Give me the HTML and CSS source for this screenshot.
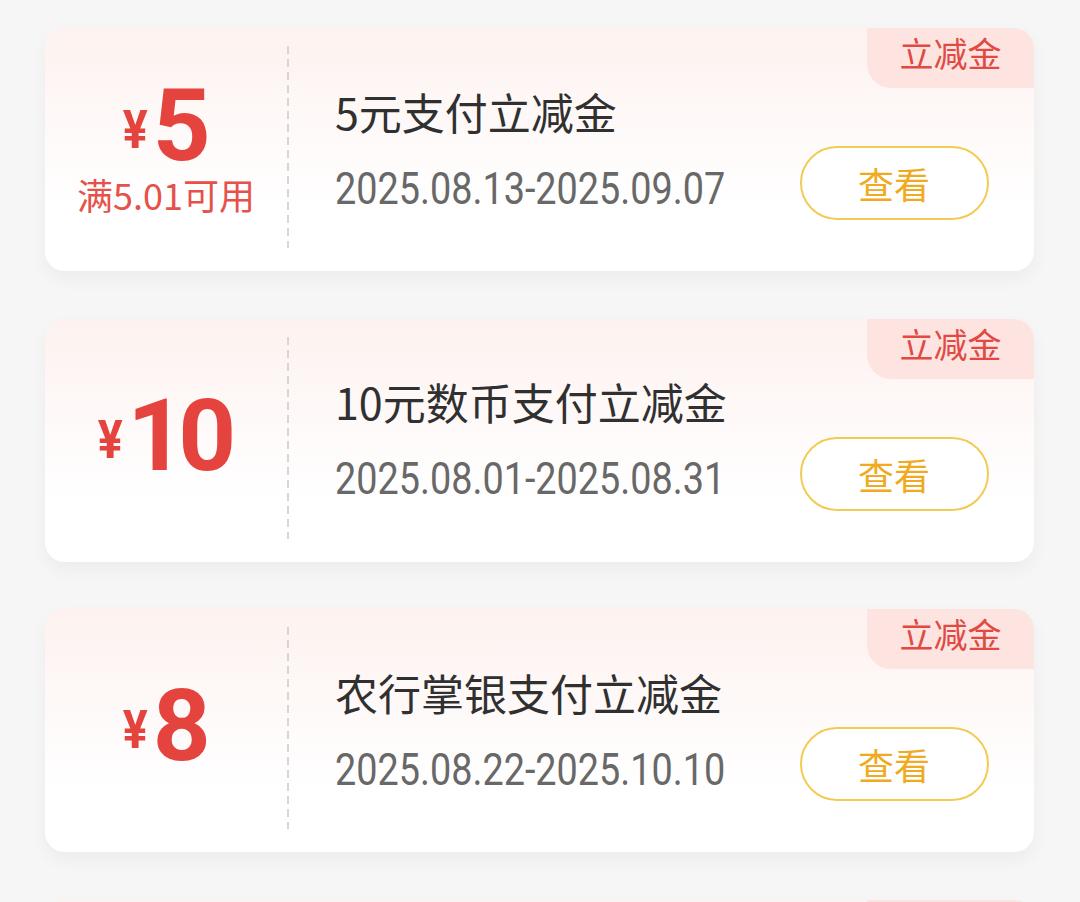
FILE: index.html
```html
<!DOCTYPE html>
<html lang="zh-CN">
<head>
<meta charset="utf-8">
<title>立减金</title>
<link rel="stylesheet" href="styles.css">
</head>
<body>
<div class="list">
  <div class="card">
    <div class="left">
      <div class="amount"><span class="yen">¥</span><span class="num">5</span></div>
      <div class="cond">满5.01可用</div>
    </div>
    <div class="divider"></div>
    <div class="info">
      <div class="title">5元支付立减金</div>
      <div class="date"><span class="date-text">2025.08.13-2025.09.07</span></div>
    </div>
    <button class="btn">查看</button>
    <div class="tag">立减金</div>
  </div>
  <div class="card">
    <div class="left">
      <div class="amount"><span class="yen">¥</span><span class="num">10</span></div>
    </div>
    <div class="divider"></div>
    <div class="info">
      <div class="title">10元数币支付立减金</div>
      <div class="date"><span class="date-text">2025.08.01-2025.08.31</span></div>
    </div>
    <button class="btn">查看</button>
    <div class="tag">立减金</div>
  </div>
  <div class="card">
    <div class="left">
      <div class="amount"><span class="yen">¥</span><span class="num">8</span></div>
    </div>
    <div class="divider"></div>
    <div class="info">
      <div class="title">农行掌银支付立减金</div>
      <div class="date"><span class="date-text">2025.08.22-2025.10.10</span></div>
    </div>
    <button class="btn">查看</button>
    <div class="tag">立减金</div>
  </div>
  <div class="card">
    <div class="left">
      <div class="amount"><span class="yen">¥</span><span class="num">5</span></div>
    </div>
    <div class="divider"></div>
    <div class="info">
      <div class="title">5元支付立减金</div>
      <div class="date"><span class="date-text">2025.09.01-2025.09.30</span></div>
    </div>
    <button class="btn">查看</button>
    <div class="tag">立减金</div>
  </div>
</div>
</body>
</html>
```
FILE: styles.css
```css
html, body {
  margin: 0;
  padding: 0;
  background: #f6f6f6;
}
body {
  font-family: "Noto Sans CJK SC", "Noto Sans", sans-serif;
  overflow: hidden;
  height: 902px;
}
.list {
  display: flex;
  flex-direction: column;
  gap: 47.5px;
  padding: 28px 46px 0 45px;
}
.card {
  position: relative;
  height: 243px;
  border-radius: 20px;
  background: linear-gradient(180deg, #fdf2ef 0%, #fefaf9 45%, #ffffff 75%);
  box-shadow: 0 8px 18px rgba(0, 0, 0, 0.045);
  display: grid;
  grid-template-columns: 242px 2px 1fr auto;
  overflow: hidden;
}
.left {
  display: flex;
  flex-direction: column;
  align-items: center;
  justify-content: center;
  padding-bottom: 9px;
  color: #e4433e;
}
.amount {
  height: 100px;
  line-height: 100px;
  font-family: Roboto, "Liberation Sans", sans-serif;
  font-weight: 700;
  white-space: nowrap;
}
.yen {
  font-size: 53px;
  vertical-align: 12px;
  margin-right: 3px;
  display: inline-block;
  transform: scaleX(0.88);
}
.num {
  font-size: 101px;
  letter-spacing: -7px;
  margin-right: 7px;
}
.cond {
  margin-top: -2px;
  font-size: 36px;
  line-height: 40px;
  color: #e5524b;
  white-space: nowrap;
}
.divider {
  margin: 18px 0 23px;
  background: repeating-linear-gradient(180deg, #d6d6d6 0 8px, transparent 8px 13px);
}
.info {
  display: flex;
  flex-direction: column;
  justify-content: center;
  gap: 28px;
  padding-left: 46px;
}
.title {
  font-size: 43px;
  line-height: 50px;
  color: #303030;
  white-space: nowrap;
}
.date {
  font-family: Roboto, "Liberation Sans", sans-serif;
  font-size: 45px;
  line-height: 50px;
  color: #686868;
  white-space: nowrap;
}
.date-text {
  display: inline-block;
  transform: scaleX(0.84);
  transform-origin: 0 50%;
}
.btn {
  align-self: end;
  margin: 0 47px 51px 0;
  width: 189px;
  height: 74px;
  border: 2px solid #f2cb55;
  border-radius: 37px;
  background: #ffffff;
  color: #f0aa22;
  font-family: "Noto Sans CJK SC", sans-serif;
  font-size: 36px;
  padding: 0;
  line-height: 70px;
}
.tag {
  position: absolute;
  top: 0;
  right: 0;
  width: 167px;
  height: 60px;
  background: #fde4e1;
  border-radius: 0 20px 0 24px;
  color: #e04a43;
  font-size: 34px;
  line-height: 50px;
  text-align: center;
}
```
